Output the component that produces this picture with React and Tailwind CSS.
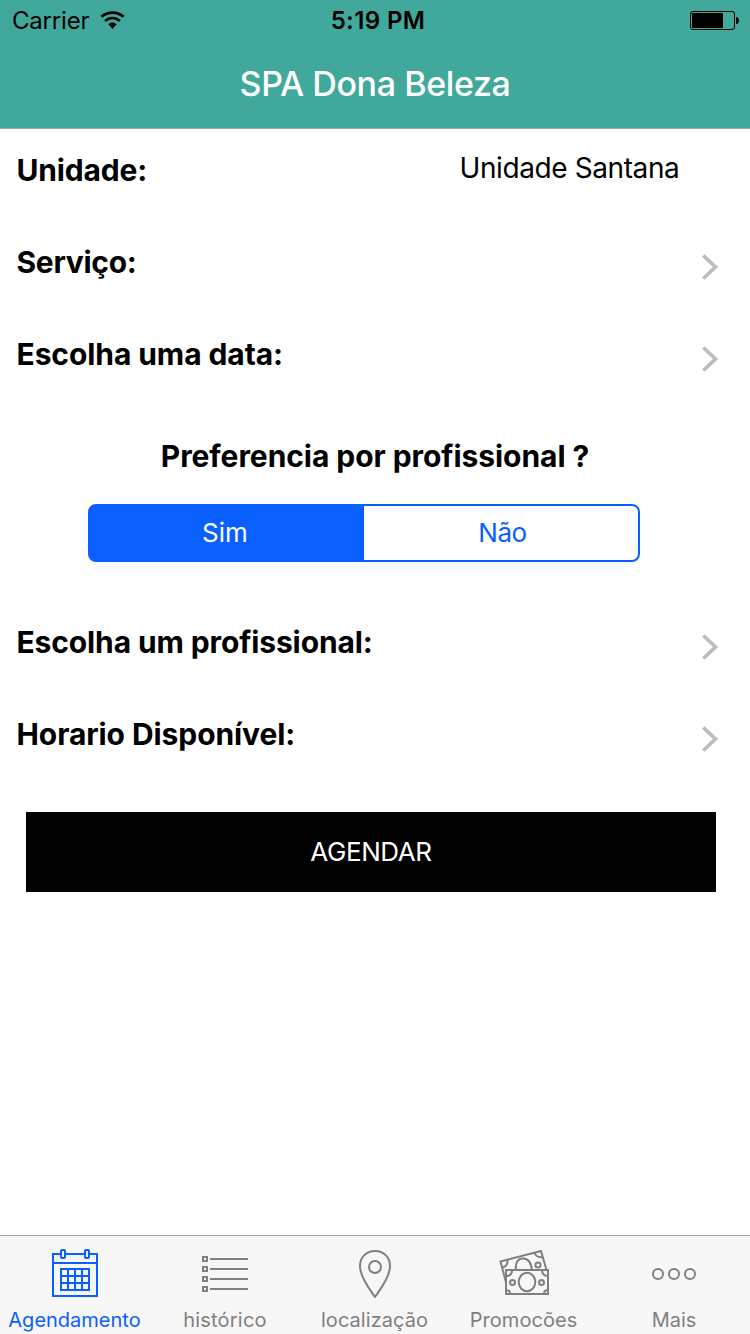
import React from 'react';

function StatusBar() {
  return (
    <div className="grid h-10 grid-cols-3 items-start pl-3 pr-[11px] text-[24px] leading-[41px] text-black">
      <div className="flex items-center">
        <span className="w-[88px] whitespace-nowrap tracking-[-0.2px]">Carrier</span>
        <svg className="h-[19px] w-[26px]" viewBox="0 0 26 19" fill="none">
          <path d="M1.4 5.800C7.6 .2 17.4 .2 23.6 5.800" stroke="#000" strokeWidth="2.800" />
          <path d="M5.1 10C9.3 6 15.7 6 19.9 10" stroke="#000" strokeWidth="2.6" />
          <path d="M8.3 13.3C10.8 11 14.2 11 16.7 13.3L12.5 18Z" fill="#000" />
        </svg>
      </div>
      <span className="pl-[5px] text-center font-semibold tracking-[0.4px]">5:19 PM</span>
      <svg className="mt-[11px] h-[19px] w-[49px] justify-self-end" viewBox="0 0 49 19">
        <rect x=".5" y=".5" width="44" height="18" rx="2.5" fill="none" stroke="#000" />
        <rect x="2" y="2" width="31" height="15" rx="1" fill="#000" />
        <path d="M46 6h1q2 1 2 3.500t-2 3.500h-1z" fill="#000" />
      </svg>
    </div>
  );
}

function Chevron() {
  return (
    <svg className="mt-2 h-[26px] w-[18px]" viewBox="0 0 18 26" fill="none">
      <path d="M2.300 1.500L14.500 13L2.300 24.500" stroke="#bbbbc1" strokeWidth="3.700" />
    </svg>
  );
}

function Row({ label, spacing }) {
  return (
    <div className="flex h-[92px] items-center justify-between pl-[16.5px] pr-[31px]">
      <span className={`pb-0.5 text-[30px] font-bold leading-10 ${spacing}`}>{label}</span>
      <Chevron />
    </div>
  );
}

function CalendarIcon() {
  return (
    <svg className="h-[50px] w-[50px]" viewBox="0 0 50 50" fill="none" stroke="currentColor" strokeWidth="2">
      <path d="M10 6H3V48H47V6H40M16 6H34M3 15H47" />
      <rect x="11" y="2" width="4" height="8" rx="1" />
      <rect x="35" y="2" width="4" height="8" rx="1" />
      <path d="M11 21H39V42H11ZM18 21V42M25 21V42M32 21V42M11 28H39M11 35H39" />
    </svg>
  );
}

function ListIcon() {
  return (
    <svg className="h-[50px] w-[50px]" viewBox="0 0 50 50" fill="none" stroke="currentColor" strokeWidth="2">
      {[11, 21, 31, 41].map((y) => (
        <g key={y}>
          <rect x="3" y={y - 2} width="4" height="4" />
          <path d={`M10 ${y}H48`} />
        </g>
      ))}
    </svg>
  );
}

function PinIcon() {
  return (
    <svg className="h-[50px] w-[50px]" viewBox="0 0 50 50" fill="none" stroke="currentColor" strokeWidth="2">
      <path d="M25 49C21 43 10 30 10 18C10 9 16.500 3 25 3S40 9 40 18C40 30 29 43 25 49Z" />
      <circle cx="25" cy="19" r="6" />
    </svg>
  );
}

function MoneyIcon() {
  return (
    <svg className="h-[50px] w-[50px] overflow-visible" viewBox="0 0 50 50" fill="none" stroke="currentColor" strokeWidth="2">
      <path d="M6 34.500L.5 13.500L41 3L46.500 22" />
      <path d="M2.500 19.500Q8 18 7.500 12M34.500 5Q36.500 10 43 9" />
      <path d="M16 22C15 14 18.500 10.500 23 10.500S31 14 32 22" />
      <circle cx="38" cy="17" r="2.600" />
      <rect x="6" y="22" width="42" height="24" />
      <ellipse cx="27" cy="34" rx="8.300" ry="9.200" />
      <circle cx="12.500" cy="34.500" r="2.500" />
      <circle cx="41.500" cy="34.500" r="2.500" />
      <path d="M6 28Q12 28 12 22M42 22Q42 28 48 28M6 42Q10 42 10 46M44 46Q44 42 48 42" />
    </svg>
  );
}

function MoreIcon() {
  return (
    <svg className="h-[50px] w-[50px]" viewBox="0 0 50 50" fill="none" stroke="currentColor" strokeWidth="2">
      <circle cx="8" cy="26" r="5" />
      <circle cx="24" cy="26" r="5" />
      <circle cx="40" cy="26" r="5" />
    </svg>
  );
}

const tabs = [
  { label: 'Agendamento', Icon: CalendarIcon, style: 'text-[#0a60ff]', spacing: 'pr-px tracking-[0px]' },
  { label: 'histórico', Icon: ListIcon, style: 'text-[#808080]', spacing: 'tracking-[0.2px]' },
  { label: 'localização', Icon: PinIcon, style: 'text-[#808080]', spacing: 'pr-px tracking-[0.05px]' },
  { label: 'Promocões', Icon: MoneyIcon, style: 'text-[#808080]', spacing: 'pr-[3px] tracking-[0.05px]' },
  { label: 'Mais', Icon: MoreIcon, style: 'text-[#808080]', spacing: 'pr-[2px] tracking-[0px]' },
];

export default function App() {
  return (
    <div className="flex h-[1334px] w-[750px] flex-col overflow-hidden bg-white font-['Inter',sans-serif] text-black">
      <header className="h-[129px] shrink-0 border-b border-[#a2a2a2] bg-[#41a99b]">
        <StatusBar />
        <h1 className="text-center text-[34px] font-medium leading-[87px] tracking-[-0.4px] text-white">SPA Dona Beleza</h1>
      </header>
      <main className="flex flex-1 flex-col">
        <div className="flex h-[88px] pl-[16.5px]">
          <span className="w-[443px] text-[30px] font-bold leading-[82px] tracking-[-0.15px]">Unidade:</span>
          <span className="whitespace-nowrap text-[28px] leading-[78px] tracking-[-0.4px]">Unidade Santana</span>
        </div>
        <Row label="Serviço:" spacing="tracking-[-0.3px]" />
        <Row label="Escolha uma data:" spacing="tracking-[-0.08px]" />
        <h2 className="mt-[35px] text-center text-[30px] font-bold leading-10 tracking-[-0.06px]">Preferencia por profissional ?</h2>
        <div className="ml-[88px] mt-7 grid h-[58px] w-[552px] grid-cols-2 overflow-hidden rounded-[8px] border-2 border-[#0a60ff] bg-[linear-gradient(90deg,#0a60ff_50%,#ffffff_50%)] text-center text-[26px] leading-[53px]">
          <button className="self-start pr-1 text-white">Sim</button>
          <button className="self-start pl-[3px] tracking-[-0.4px] text-[#0a60ff]">Não</button>
        </div>
        <div className="mt-[35px]">
          <Row label="Escolha um profissional:" spacing="tracking-[-0.12px]" />
          <Row label="Horario Disponível:" spacing="tracking-[-0.08px]" />
        </div>
        <button className="ml-[26px] mt-[31px] flex h-20 w-[690px] items-start justify-center bg-black text-[26px] leading-[79px] tracking-[-0.4px] text-white">AGENDAR</button>
      </main>
      <nav className="grid h-[99px] shrink-0 grid-cols-5 border-t border-[#a2a2a2] bg-[#f7f7f7]">
        {tabs.map(({ label, Icon, style, spacing }) => (
          <button key={label} className={`flex flex-col items-center pt-3 text-[20px] ${style}`}>
            <Icon />
            <span className={`mt-[10px] whitespace-nowrap leading-6 ${spacing}`}>{label}</span>
          </button>
        ))}
      </nav>
    </div>
  );
}
